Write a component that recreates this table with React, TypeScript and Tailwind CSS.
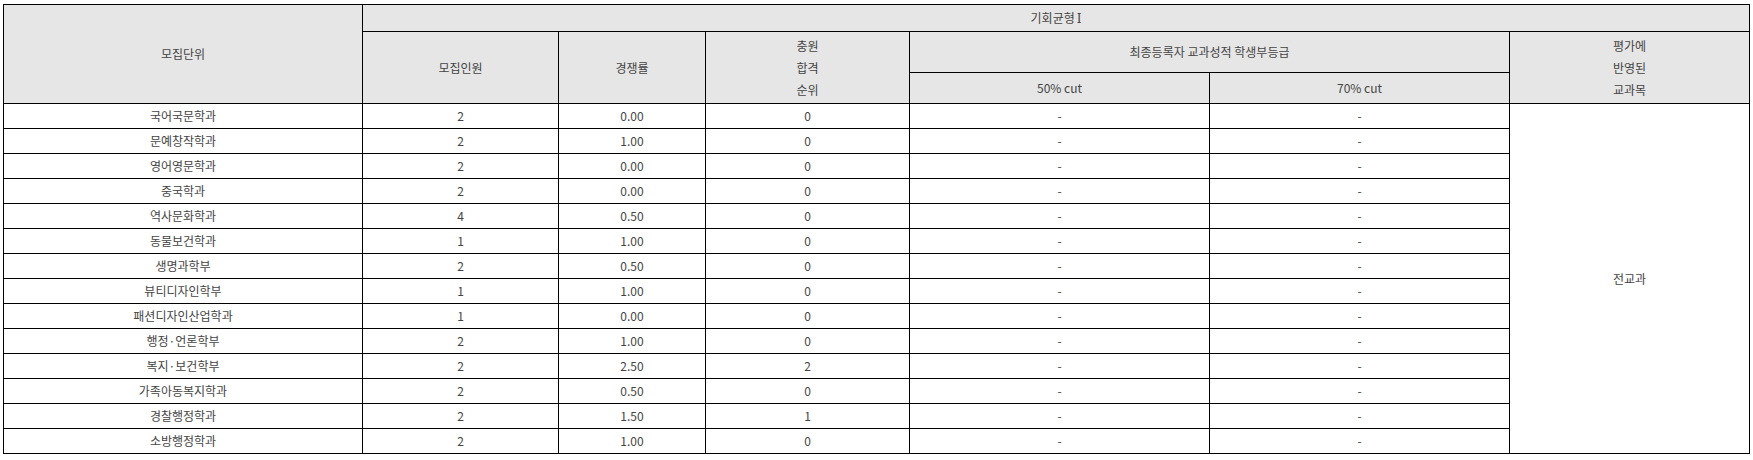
const rows: [string, number, string, number][] = [
  ["국어국문학과", 2, "0.00", 0],
  ["문예창작학과", 2, "1.00", 0],
  ["영어영문학과", 2, "0.00", 0],
  ["중국학과", 2, "0.00", 0],
  ["역사문화학과", 4, "0.50", 0],
  ["동물보건학과", 1, "1.00", 0],
  ["생명과학부", 2, "0.50", 0],
  ["뷰티디자인학부", 1, "1.00", 0],
  ["패션디자인산업학과", 1, "0.00", 0],
  ["행정·언론학부", 2, "1.00", 0],
  ["복지·보건학부", 2, "2.50", 2],
  ["가족아동복지학과", 2, "0.50", 0],
  ["경찰행정학과", 2, "1.50", 1],
  ["소방행정학과", 2, "1.00", 0],
];

const th = "border border-black bg-[#e6e6e6] font-normal text-center align-middle p-0";
const td = "border border-black text-center align-middle p-0";

export default function App() {
  return (
    <div className="pt-1 pl-[3px] bg-white text-[12px] text-[#444] font-['Noto_Sans_CJK_KR','Noto_Sans',sans-serif]">
      <table className="table-fixed border-collapse w-[1746px]">
        <colgroup>
          <col className="w-[359px]" />
          <col className="w-[196px]" />
          <col className="w-[147px]" />
          <col className="w-[204px]" />
          <col className="w-[300px]" />
          <col className="w-[300px]" />
          <col className="w-[240px]" />
        </colgroup>
        <thead>
          <tr className="h-[27px]">
            <th rowSpan={3} className={th}>모집단위</th>
            <th colSpan={6} className={th}>
              기회균형<span className="ml-[2px] font-['DejaVu_Serif',serif] text-[12px]">Ⅰ</span>
            </th>
          </tr>
          <tr className="h-[41px]">
            <th rowSpan={2} className={th}>모집인원</th>
            <th rowSpan={2} className={th}>경쟁률</th>
            <th rowSpan={2} className={`${th} leading-[22px]`}>충원<br />합격<br />순위</th>
            <th colSpan={2} className={th}>최종등록자 교과성적 학생부등급</th>
            <th rowSpan={2} className={`${th} leading-[22px]`}>평가에<br />반영된<br />교과목</th>
          </tr>
          <tr className="h-[31px]">
            <th className={th}>50% cut</th>
            <th className={th}>70% cut</th>
          </tr>
        </thead>
        <tbody>
          {rows.map((r, i) => (
            <tr key={r[0]} className="h-[25px]">
              <td className={td}>{r[0]}</td>
              <td className={td}>{r[1]}</td>
              <td className={td}>{r[2]}</td>
              <td className={td}>{r[3]}</td>
              <td className={td}>-</td>
              <td className={td}>-</td>
              {i === 0 && (
                <td rowSpan={rows.length} className={td}>전교과</td>
              )}
            </tr>
          ))}
        </tbody>
      </table>
    </div>
  );
}
